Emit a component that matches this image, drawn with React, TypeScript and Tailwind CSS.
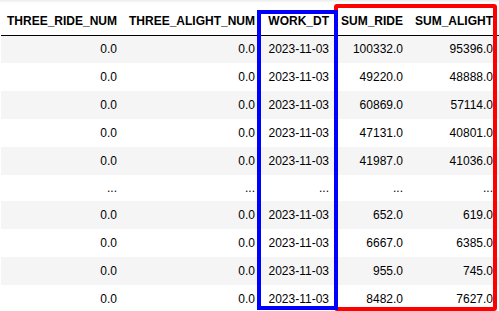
import React from "react";

const columns = ["THREE_RIDE_NUM", "THREE_ALIGHT_NUM", "WORK_DT", "SUM_RIDE", "SUM_ALIGHT"];
const widths = ["w-[122px]", "w-[134px]", "w-[77px]", "w-[74px]", "w-[90px]"];

const rows: string[][] = [
  ["0.0", "0.0", "2023-11-03", "100332.0", "95396.0"],
  ["0.0", "0.0", "2023-11-03", "49220.0", "48888.0"],
  ["0.0", "0.0", "2023-11-03", "60869.0", "57114.0"],
  ["0.0", "0.0", "2023-11-03", "47131.0", "40801.0"],
  ["0.0", "0.0", "2023-11-03", "41987.0", "41036.0"],
  ["...", "...", "...", "...", "..."],
  ["0.0", "0.0", "2023-11-03", "652.0", "619.0"],
  ["0.0", "0.0", "2023-11-03", "6667.0", "6385.0"],
  ["0.0", "0.0", "2023-11-03", "955.0", "745.0"],
  ["0.0", "0.0", "2023-11-03", "8482.0", "7627.0"],
];

export default function App() {
  return (
    <div className="relative h-[311px] w-[499px] overflow-hidden bg-white font-['Liberation_Sans',Arial,sans-serif] text-[12px] text-black">
      <div className="h-[3px] bg-gradient-to-b from-[#ececec] to-white" />
      <table className="ml-[1px] mt-[4px] table-fixed border-collapse">
        <thead>
          <tr className="h-[28px] border-b border-black">
            {columns.map((c, i) => (
              <th key={c} className={`${widths[i]} px-[6px] text-right align-middle font-bold whitespace-nowrap`}>
                {c}
              </th>
            ))}
          </tr>
        </thead>
        <tbody>
          {rows.map((r, ri) => (
            <tr
              key={ri}
              className={
                (ri % 2 === 0 ? "bg-[#f5f5f5] " : "bg-white ") + (r[0] === "..." ? "h-[26px]" : "h-[28px]")
              }
            >
              {r.map((v, ci) => (
                <td key={ci} className="px-[6px] text-right align-middle whitespace-nowrap">
                  {v}
                </td>
              ))}
            </tr>
          ))}
        </tbody>
      </table>
      {/* annotation boxes */}
      <div className="absolute left-[334px] top-[4px] h-[307px] w-[163px] rounded-[3px] border-4 border-[#ff0000]" />
      <div className="absolute left-[257px] top-[10px] h-[300px] w-[81px] border-4 border-[#0000ff]" />
    </div>
  );
}
